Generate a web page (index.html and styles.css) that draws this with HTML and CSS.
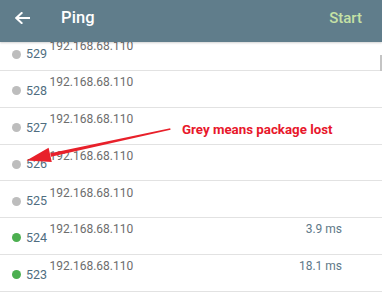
FILE: index.html
```html
<!DOCTYPE html>
<html lang="en">
<head>
<meta charset="utf-8">
<title>Ping</title>
<link rel="stylesheet" href="styles.css">
</head>
<body>
<div class="screen">
  <header class="appbar">
    <span class="back" aria-label="Back">
      <svg width="15" height="12" viewBox="0 0 15 12"><path d="M14.5 6H1.6M6.6 1L1.3 6l5.3 5" fill="none" stroke="#ffffff" stroke-width="2" stroke-linecap="square" stroke-linejoin="miter"/></svg>
    </span>
    <h1 class="title">Ping</h1>
    <span class="action">Start</span>
  </header>
  <main class="content">
    <ul class="list">
      <li class="row"><span class="lead"><i class="dot lost"></i><span class="seq">529</span></span><span class="ip">192.168.68.110</span><span class="time"></span></li>
      <li class="row"><span class="lead"><i class="dot lost"></i><span class="seq">528</span></span><span class="ip">192.168.68.110</span><span class="time"></span></li>
      <li class="row"><span class="lead"><i class="dot lost"></i><span class="seq">527</span></span><span class="ip">192.168.68.110</span><span class="time"></span></li>
      <li class="row"><span class="lead"><i class="dot lost"></i><span class="seq">526</span></span><span class="ip">192.168.68.110</span><span class="time"></span></li>
      <li class="row"><span class="lead"><i class="dot lost"></i><span class="seq">525</span></span><span class="ip">192.168.68.110</span><span class="time"></span></li>
      <li class="row"><span class="lead"><i class="dot ok"></i><span class="seq">524</span></span><span class="ip">192.168.68.110</span><span class="time">3.9 ms</span></li>
      <li class="row"><span class="lead"><i class="dot ok"></i><span class="seq">523</span></span><span class="ip">192.168.68.110</span><span class="time">18.1 ms</span></li>
    </ul>
    <div class="scrollbar"></div>
  </main>
  <svg class="annotation" width="382" height="292" viewBox="0 0 382 292">
    <polygon points="170.2,128.2 170.6,129.8 51,156.8 50.2,153.2" fill="#e8202a"/>
    <polygon points="26.5,160.4 48.6,147.8 51.8,162" fill="#e8202a"/>
  </svg>
  <div class="note">Grey means package lost</div>
</div>
</body>
</html>
```
FILE: styles.css
```css
* { box-sizing: border-box; }
html, body { margin: 0; padding: 0; background: #ffffff; }
body { font-family: Roboto, "Noto Sans", "Liberation Sans", sans-serif; }

.screen {
  position: relative;
  width: 382px;
  height: 292px;
  overflow: hidden;
  display: flex;
  flex-direction: column;
}

.appbar {
  position: relative;
  z-index: 2;
  flex: 0 0 42px;
  height: 42px;
  background: #607d8b;
  display: flex;
  align-items: center;
  padding: 0 20px 6px 15px;
  box-shadow: 0 1px 2px rgba(0, 0, 0, 0.18);
}
.back { display: flex; width: 15px; height: 12px; }
.back svg { display: block; }
.title {
  margin: 0 0 0 31px;
  font-size: 16.5px;
  line-height: 20px;
  font-weight: 500;
  color: #ffffff;
  letter-spacing: 0.1px;
}
.action {
  margin-left: auto;
  font-size: 15px;
  line-height: 20px;
  font-weight: 500;
  color: #c5e1a5;
}

.content {
  position: relative;
  flex: 1 1 auto;
  overflow: hidden;
}
.list {
  list-style: none;
  margin: -7.75px 0 0 0;
  padding: 0;
}
.row {
  height: 36.75px;
  border-bottom: 1px solid #e2e2e2;
  display: flex;
  align-items: flex-start;
  padding: 4.4px 40px 0 12px;
  font-size: 12px;
  line-height: 14px;
}
.lead {
  display: flex;
  align-items: center;
  margin-top: 8.4px;
}
.dot {
  width: 9px;
  height: 9px;
  border-radius: 50%;
  margin-right: 5px;
}
.dot.lost { background: #bdbdbd; }
.dot.ok { background: #4caf50; }
.seq { color: #4f6d80; font-size: 12.5px; }
.ip { margin-left: 2.5px; color: #6d6d6d; }
.time { margin-left: auto; color: #5e7888; }

.scrollbar {
  position: absolute;
  right: 0;
  top: 13px;
  width: 2.5px;
  height: 16px;
  background: #c4c4c4;
}

.annotation {
  position: absolute;
  left: 0;
  top: 0;
  z-index: 3;
  pointer-events: none;
}
.note {
  position: absolute;
  z-index: 3;
  left: 182px;
  top: 121.5px;
  font-family: Roboto, "Liberation Sans", sans-serif;
  font-weight: 700;
  font-size: 13.3px;
  line-height: 15px;
  color: #e8172b;
}
```
